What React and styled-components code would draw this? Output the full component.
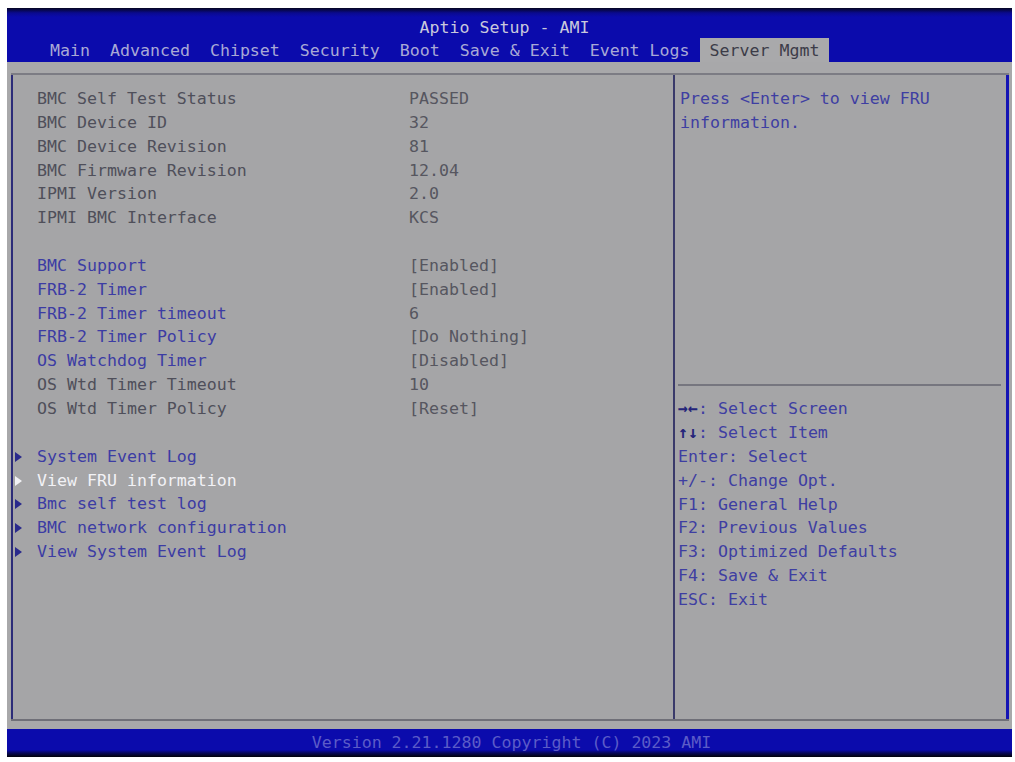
import React from "react";
import styled, { createGlobalStyle } from "styled-components";

const GlobalStyle = createGlobalStyle`
  html, body { margin: 0; padding: 0; background: #ffffff; }
  body { font-family: "DejaVu Sans Mono", "Liberation Mono", monospace; }
  *, *::before, *::after { box-sizing: border-box; }
`;

const Page = styled.div`
  padding: 8px 0 0 7px;
`;

const Screen = styled.div`
  width: 1005px;
  height: 749px;
  display: flex;
  flex-direction: column;
  font-family: "DejaVu Sans Mono", "Liberation Mono", monospace;
  font-size: 16.6px;
  background: #a7a7a9;
`;

const Header = styled.header`
  height: 54px;
  background: linear-gradient(to bottom, #050520 0px, #0a0a90 5px, #0b0bac 9px, #0b0bac 100%);
  display: flex;
  flex-direction: column;
`;

const Title = styled.div`
  height: 30px;
  line-height: 39px;
  text-align: center;
  color: #c9c9dc;
  padding-right: 10px;
`;

const Tabs = styled.nav`
  height: 24px;
  display: flex;
  padding-left: 33px;
`;

const Tab = styled.div`
  padding: 0 10px;
  line-height: 25px;
  white-space: pre;
  color: ${(p) => (p.$active ? "#3c3c48" : "#a9a9d6")};
  background: ${(p) => (p.$active ? "#a9a9ab" : "transparent")};
`;

const Body = styled.main`
  flex: 1;
  padding: 11px 3px 8px 4px;
  display: flex;
  background: #a8a8aa;
`;

const Panel = styled.div`
  flex: 1;
  display: grid;
  grid-template-columns: 664px 1fr;
  border-top: 2px solid #7c7c84;
  border-bottom: 2px solid #6f6f78;
  background: #a5a5a7;
`;

const LeftCol = styled.section`
  border-left: 2px solid #2c2c78;
  border-right: 2px solid #3a3a6a;
  padding: 12px 0 0 2px;
  display: flex;
  flex-direction: column;
`;

const Row = styled.div`
  height: 23.85px;
  line-height: 24px;
  display: grid;
  grid-template-columns: 22px 372px 1fr;
  white-space: pre;
`;

const Marker = styled.span`
  display: flex;
  align-items: center;
`;

const Label = styled.span`
  color: ${(p) =>
    p.$selected ? "#f2f2f6" : p.$kind === "blue" ? "#3c3ca4" : "#4f4f5a"};
`;

const Value = styled.span`
  color: #56565f;
`;

const RightCol = styled.aside`
  border-right: 3px solid #1414b4;
  display: flex;
  flex-direction: column;
`;

const HelpTop = styled.div`
  height: 309px;
  padding: 12px 0 0 5px;
  line-height: 24px;
  color: #3e3ea2;
`;

const Divider = styled.div`
  height: 2px;
  margin: 0 5px 0 3px;
  background: #76767f;
`;

const HelpList = styled.div`
  padding: 11px 0 0 3px;
  display: flex;
  flex-direction: column;
`;

const HelpLine = styled.div`
  height: 23.9px;
  line-height: 24px;
  white-space: pre;
  color: #3e3ea2;
`;

const Key = styled.span`
  color: ${(p) => (p.$dark ? "#24247a" : "#3e3ea2")};
  font-weight: ${(p) => (p.$dark ? 700 : 400)};
`;

const Footer = styled.footer`
  height: 28px;
  background: linear-gradient(to bottom, #0b0bac 0px, #0b0bac 21px, #08085a 24px, #020208 28px);
  color: #5c5cc8;
  text-align: center;
  line-height: 28px;
  padding-left: 4px;
`;

const Arrow = () => (
  <svg width="7" height="10" viewBox="0 0 7 10">
    <path d="M0 0 L7 5 L0 10 Z" fill="currentColor" />
  </svg>
);

const ArrowWrap = styled.span`
  display: inline-flex;
  color: ${(p) => (p.$selected ? "#f2f2f6" : "#2a2a8c")};
`;

const info = [
  ["BMC Self Test Status", "PASSED"],
  ["BMC Device ID", "32"],
  ["BMC Device Revision", "81"],
  ["BMC Firmware Revision", "12.04"],
  ["IPMI Version", "2.0"],
  ["IPMI BMC Interface", "KCS"],
];

const settings = [
  ["BMC Support", "[Enabled]", "blue"],
  ["FRB-2 Timer", "[Enabled]", "blue"],
  ["FRB-2 Timer timeout", "6", "blue"],
  ["FRB-2 Timer Policy", "[Do Nothing]", "blue"],
  ["OS Watchdog Timer", "[Disabled]", "blue"],
  ["OS Wtd Timer Timeout", "10", "gray"],
  ["OS Wtd Timer Policy", "[Reset]", "gray"],
];

const submenus = [
  ["System Event Log", false],
  ["View FRU information", true],
  ["Bmc self test log", false],
  ["BMC network configuration", false],
  ["View System Event Log", false],
];

const tabs = ["Main", "Advanced", "Chipset", "Security", "Boot", "Save & Exit", "Event Logs", "Server Mgmt"];

const help = [
  ["→←", ": Select Screen", true],
  ["↑↓", ": Select Item", true],
  ["", "Enter: Select", false],
  ["", "+/-: Change Opt.", false],
  ["", "F1: General Help", false],
  ["", "F2: Previous Values", false],
  ["", "F3: Optimized Defaults", false],
  ["", "F4: Save & Exit", false],
  ["", "ESC: Exit", false],
];

export default function App() {
  return (
    <Page>
      <GlobalStyle />
      <Screen>
        <Header>
          <Title>Aptio Setup - AMI</Title>
          <Tabs>
            {tabs.map((t) => (
              <Tab key={t} $active={t === "Server Mgmt"}>
                {t}
              </Tab>
            ))}
          </Tabs>
        </Header>
        <Body>
          <Panel>
            <LeftCol>
              {info.map(([l, v]) => (
                <Row key={l}>
                  <Marker />
                  <Label>{l}</Label>
                  <Value>{v}</Value>
                </Row>
              ))}
              <Row />
              {settings.map(([l, v, k]) => (
                <Row key={l}>
                  <Marker />
                  <Label $kind={k}>{l}</Label>
                  <Value>{v}</Value>
                </Row>
              ))}
              <Row />
              {submenus.map(([l, sel]) => (
                <Row key={l}>
                  <Marker>
                    <ArrowWrap $selected={sel}>
                      <Arrow />
                    </ArrowWrap>
                  </Marker>
                  <Label $kind="blue" $selected={sel}>
                    {l}
                  </Label>
                  <Value />
                </Row>
              ))}
            </LeftCol>
            <RightCol>
              <HelpTop>
                Press &lt;Enter&gt; to view FRU
                <br />
                information.
              </HelpTop>
              <Divider />
              <HelpList>
                {help.map(([k, t, dark]) => (
                  <HelpLine key={t}>
                    {k && <Key $dark={dark}>{k}</Key>}
                    {t}
                  </HelpLine>
                ))}
              </HelpList>
            </RightCol>
          </Panel>
        </Body>
        <Footer>Version 2.21.1280 Copyright (C) 2023 AMI</Footer>
      </Screen>
    </Page>
  );
}
